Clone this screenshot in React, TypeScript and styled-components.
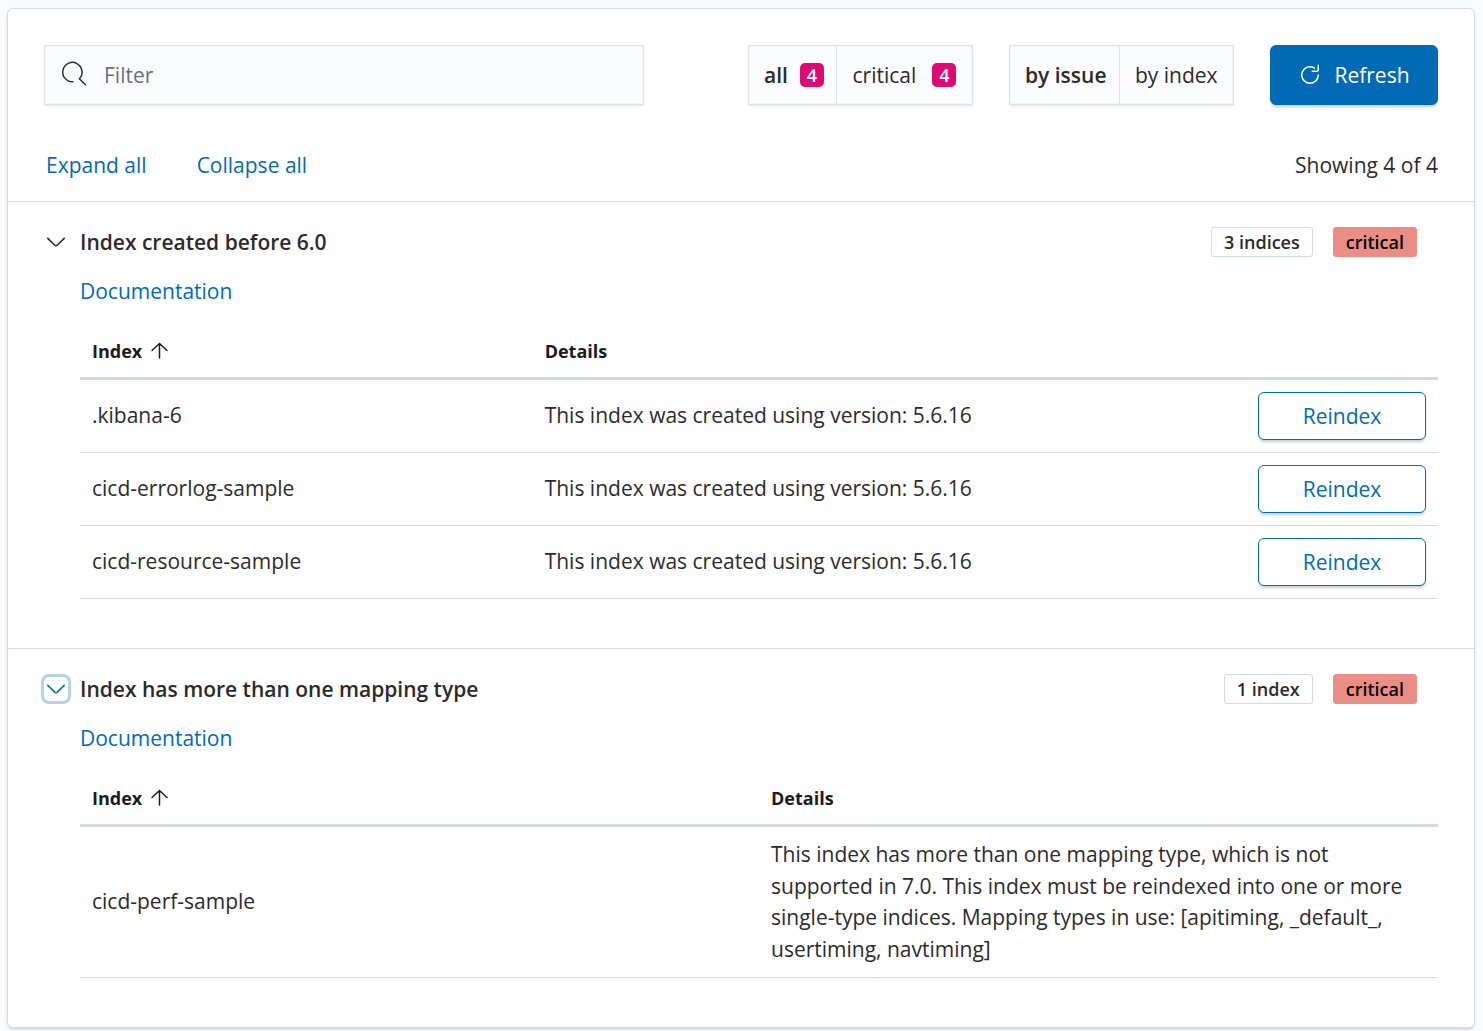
import React, { useState } from 'react';
import styled, { createGlobalStyle, css } from 'styled-components';

const color = {
  primary: '#006bb4',
  text: '#2b2b2d',
  title: '#1a1c21',
  subdued: '#69707d',
  border: '#d3dae6',
  field: '#fbfcfd',
  page: '#fafbfd',
  accent: '#dd0a73',
  danger: '#ea8d85',
};

const GlobalStyle = createGlobalStyle`
  *, *::before, *::after { box-sizing: border-box; }
  body {
    margin: 0;
    background: ${color.page};
    color: ${color.text};
    font-family: 'Open Sans', 'Noto Sans', sans-serif;
    font-size: 21px;
    font-weight: 400;
    line-height: 1.5;
  }
  button, input { font: inherit; color: inherit; }
  button { cursor: pointer; line-height: 32px; }
`;

const Page = styled.main`
  padding: 8px 8px 3px 7px;
`;

const Panel = styled.div`
  background: #fff;
  border: 1px solid ${color.border};
  border-radius: 6px;
  box-shadow: 0 3px 3px -1px rgba(152, 162, 179, 0.3), 0 1px 5px -2px rgba(152, 162, 179, 0.3);
`;

const Controls = styled.div`
  display: flex;
  flex-wrap: wrap;
  gap: 36px;
  padding: 36px 36px 0;
`;

const SearchSlot = styled.div`
  flex: 1 1 400px;
`;

const outlined = css`
  border: 1px solid #dfe1e4;
  background: ${color.field};
  box-shadow: 0 2px 3px -1px rgba(152, 162, 179, 0.3), inset 0 0 0 1px rgba(0, 0, 0, 0.03);
`;

const SearchBox = styled.label`
  ${outlined}
  display: flex;
  align-items: center;
  gap: 18px;
  height: 60px;
  max-width: 600px;
  padding: 0 17px;
`;

const SearchInput = styled.input`
  flex: 1;
  min-width: 0;
  height: 32px;
  padding: 0;
  border: 0;
  outline: 0;
  background: transparent;
  &::placeholder { color: ${color.subdued}; opacity: 1; }
`;

const FilterGroup = styled.div`
  ${outlined}
  display: flex;
  height: 60px;
  width: 225px;
`;

const FilterButton = styled.button<{ $active: boolean }>`
  display: flex;
  align-items: center;
  justify-content: center;
  flex: 1 1 auto;
  gap: 16px;
  padding: 0 12px;
  border: 0;
  background: transparent;
  font-weight: ${(p) => (p.$active ? 600 : 400)};
  &:first-child {
    flex: none;
    gap: 12px;
    padding: 0 12px 0 15px;
  }
  & + & { border-left: 1px solid #dfe1e4; }
`;

const Count = styled.span`
  width: 24px;
  border-radius: 5px;
  background: ${color.accent};
  color: #fff;
  font-size: 18px;
  font-weight: 600;
  line-height: 24px;
  text-align: center;
`;

const Button = styled.button<{ $fill?: boolean }>`
  display: inline-flex;
  align-items: center;
  justify-content: center;
  gap: 12px;
  width: 168px;
  height: ${(p) => (p.$fill ? 60 : 48)}px;
  padding: 0;
  border: 1px solid ${color.primary};
  border-radius: 6px;
  background: ${(p) => (p.$fill ? color.primary : '#fff')};
  color: ${(p) => (p.$fill ? '#fff' : color.primary)};
  box-shadow: 0 3px 3px -1px rgba(54, 97, 126, 0.3);
`;

const Summary = styled.div`
  display: flex;
  align-items: center;
  justify-content: space-between;
  padding: 44px 36px 20px 38px;
  line-height: 32px;
`;

const LinkRow = styled.div`
  display: flex;
  gap: 50px;
`;

const TextButton = styled.button`
  padding: 0;
  border: 0;
  background: transparent;
  color: ${color.primary};
`;

const Section = styled.section`
  border-top: 1px solid ${color.border};
  padding: 24px 36px 49px 33px;
`;

const SectionHead = styled.header`
  display: flex;
  align-items: center;
  gap: 9px;
`;

const Toggle = styled.button<{ $focused: boolean }>`
  display: flex;
  align-items: center;
  justify-content: center;
  width: 30px;
  height: 30px;
  padding: 0;
  border: 3px solid ${(p) => (p.$focused ? '#b2d3e8' : 'transparent')};
  border-radius: 8px;
  background: transparent;
  color: ${(p) => (p.$focused ? color.primary : color.text)};
`;

const SectionTitle = styled.h2`
  flex: 1;
  margin: 0;
  font-size: 21px;
  font-weight: 600;
  line-height: 32px;
`;

const Badges = styled.div`
  display: flex;
  gap: 20px;
  padding-right: 21px;
`;

const Badge = styled.span<{ $critical?: boolean }>`
  padding: 0 12px;
  border: 1px solid ${(p) => (p.$critical ? color.danger : color.border)};
  border-radius: 3px;
  background: ${(p) => (p.$critical ? color.danger : '#fff')};
  color: ${(p) => (p.$critical ? '#000' : color.text)};
  font-size: 18px;
  font-weight: 600;
  line-height: 28px;
`;

const SectionBody = styled.div`
  padding: 17px 0 0 39px;
`;

const DocLink = styled.a`
  display: block;
  width: fit-content;
  color: ${color.primary};
  line-height: 32px;
  text-decoration: none;
`;

const Table = styled.table`
  width: 100%;
  margin-top: 16px;
  border-collapse: separate;
  border-spacing: 0;
  table-layout: fixed;
`;

const HeadCell = styled.th`
  padding: 12px 12px 10px;
  border-bottom: 3px solid ${color.border};
  color: ${color.title};
  font-size: 18px;
  font-weight: 700;
  line-height: 32px;
  text-align: left;
`;

const SortButton = styled.button`
  display: flex;
  align-items: center;
  gap: 6px;
  padding: 0;
  border: 0;
  background: transparent;
`;

const Cell = styled.td<{ $align?: 'right' }>`
  padding: 12px;
  border-bottom: 1px solid ${color.border};
  text-align: ${(p) => p.$align ?? 'left'};
  vertical-align: middle;
  & > button { vertical-align: top; }
`;

const SearchIcon = () => (
  <svg width="24" height="24" viewBox="0 1 16 16" overflow="visible" fill="none" stroke="currentColor" aria-hidden="true">
    <path d="M7.3 13.5A6.45 6.45 0 1 1 11.6 11.5L15.6 15.5" strokeLinecap="round" strokeLinejoin="round" />
  </svg>
);

const RefreshIcon = () => (
  <svg width="24" height="24" viewBox="0 0 16 16" fill="currentColor" aria-hidden="true">
    <path d="M11.228 2.942a.5.5 0 1 1-.538.842A5 5 0 1 0 13 8a.5.5 0 1 1 1 0 6 6 0 1 1-2.772-5.058zM14 1.5v3A1.5 1.5 0 0 1 12.5 6h-3a.5.5 0 0 1 0-1h3a.5.5 0 0 0 .5-.5v-3a.5.5 0 1 1 1 0z" />
  </svg>
);

const ArrowDownIcon = styled(({ className }: { className?: string }) => (
  <svg className={className} width="24" height="24" viewBox="0 0 16 16" fill="currentColor" aria-hidden="true">
    <path d="M13.069 5.157L8.384 9.768a.546.546 0 0 1-.768 0L2.93 5.158a.552.552 0 0 0-.771 0 .53.53 0 0 0 0 .759l4.684 4.61c.641.631 1.672.63 2.312 0l4.684-4.61a.53.53 0 0 0 0-.76.552.552 0 0 0-.771 0z" />
  </svg>
))`
  flex: none;
`;

const SortUpIcon = () => (
  <svg width="24" height="24" viewBox="0 0 24 24" fill="none" stroke="currentColor" strokeWidth="1.5" aria-hidden="true">
    <path d="M11.5 19V4.5M4 11.5L11.5 4.5L19 11.5" strokeLinecap="round" strokeLinejoin="round" />
  </svg>
);

type Row = { name: string; details: string };
type Issue = { title: string; count: string; rows: Row[]; reindex: boolean; focused: boolean };

const created = 'This index was created using version: 5.6.16';

const issues: Issue[] = [
  {
    title: 'Index created before 6.0',
    count: '3 indices',
    reindex: true,
    focused: false,
    rows: [
      { name: '.kibana-6', details: created },
      { name: 'cicd-errorlog-sample', details: created },
      { name: 'cicd-resource-sample', details: created },
    ],
  },
  {
    title: 'Index has more than one mapping type',
    count: '1 index',
    reindex: false,
    focused: true,
    rows: [
      {
        name: 'cicd-perf-sample',
        details:
          'This index has more than one mapping type, which is not supported in 7.0. This index must be reindexed into one or more single-type indices. Mapping types in use: [apitiming, _default_, usertiming, navtiming]',
      },
    ],
  },
];

function IssueTable({ issue }: { issue: Issue }) {
  return (
    <Table>
      <thead>
        <tr>
          <HeadCell scope="col" aria-sort="ascending">
            <SortButton type="button">
              Index
              <SortUpIcon />
            </SortButton>
          </HeadCell>
          <HeadCell scope="col">Details</HeadCell>
          {issue.reindex && <HeadCell as="td" />}
        </tr>
      </thead>
      <tbody>
        {issue.rows.map((row) => (
          <tr key={row.name}>
            <Cell>{row.name}</Cell>
            <Cell>{row.details}</Cell>
            {issue.reindex && (
              <Cell $align="right">
                <Button type="button">Reindex</Button>
              </Cell>
            )}
          </tr>
        ))}
      </tbody>
    </Table>
  );
}

export default function App() {
  const [filter, setFilter] = useState('');
  const [level, setLevel] = useState('all');
  const [group, setGroup] = useState('issue');
  const [open, setOpen] = useState([true, true]);

  return (
    <>
      <GlobalStyle />
      <Page>
        <Panel>
          <Controls>
            <SearchSlot>
              <SearchBox>
                <SearchIcon />
                <SearchInput
                  aria-label="Filter"
                  placeholder="Filter"
                  value={filter}
                  onChange={(e) => setFilter(e.target.value)}
                />
              </SearchBox>
            </SearchSlot>
            <FilterGroup>
              {['all', 'critical'].map((name) => (
                <FilterButton key={name} type="button" $active={level === name} onClick={() => setLevel(name)}>
                  {name}
                  <Count>4</Count>
                </FilterButton>
              ))}
            </FilterGroup>
            <FilterGroup>
              {['issue', 'index'].map((name) => (
                <FilterButton key={name} type="button" $active={group === name} onClick={() => setGroup(name)}>
                  {`by ${name}`}
                </FilterButton>
              ))}
            </FilterGroup>
            <Button type="button" $fill>
              <RefreshIcon />
              Refresh
            </Button>
          </Controls>
          <Summary>
            <LinkRow>
              <TextButton type="button" onClick={() => setOpen([true, true])}>Expand all</TextButton>
              <TextButton type="button" onClick={() => setOpen([false, false])}>Collapse all</TextButton>
            </LinkRow>
            <span>Showing 4 of 4</span>
          </Summary>
          {issues.map((issue, i) => (
            <Section key={issue.title}>
              <SectionHead>
                <Toggle
                  type="button"
                  $focused={issue.focused}
                  aria-label={issue.title}
                  aria-expanded={open[i]}
                  onClick={() => setOpen(open.map((o, j) => (j === i ? !o : o)))}
                >
                  <ArrowDownIcon />
                </Toggle>
                <SectionTitle>{issue.title}</SectionTitle>
                <Badges>
                  <Badge>{issue.count}</Badge>
                  <Badge $critical>critical</Badge>
                </Badges>
              </SectionHead>
              {open[i] && (
                <SectionBody>
                  <DocLink href="#documentation">Documentation</DocLink>
                  <IssueTable issue={issue} />
                </SectionBody>
              )}
            </Section>
          ))}
        </Panel>
      </Page>
    </>
  );
}
